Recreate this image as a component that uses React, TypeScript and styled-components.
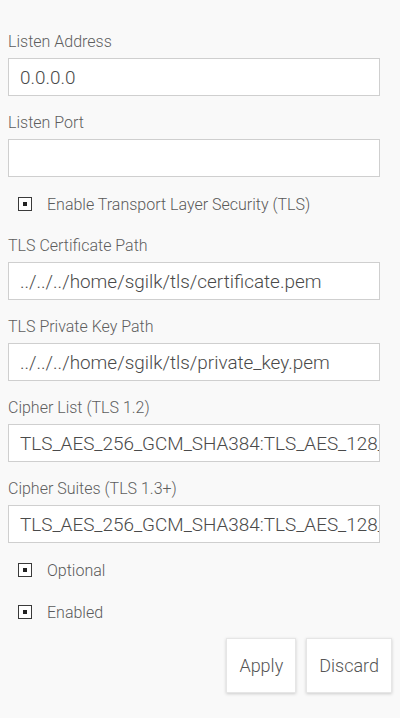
import { createGlobalStyle } from "styled-components";
import styled from "styled-components";

const GlobalStyle = createGlobalStyle`
  html, body {
    margin: 0;
    padding: 0;
    background: #f9f9f9;
  }
  body {
    font-family: Roboto, "Liberation Sans", sans-serif;
    color: #666;
  }
`;

const Page = styled.div`
  display: flex;
  flex-direction: column;
  padding: 32px 8px 24px 8px;
  min-height: 718px;
  box-sizing: border-box;
`;

const Field = styled.div`
  display: flex;
  flex-direction: column;
  gap: 7px;
  margin-bottom: 17px;
`;

const Label = styled.label`
  font-size: 16px;
  font-weight: 300;
  line-height: 19px;
  color: #5e5e5e;
`;

const Input = styled.input`
  box-sizing: border-box;
  width: 372px;
  height: 38px;
  padding: 0 0 0 11px;
  border: 1px solid #cfcfcf;
  background: #fff;
  font-family: Roboto, "Liberation Sans", sans-serif;
  font-size: 18.9px;
  font-weight: 300;
  color: #4a4a4a;
  outline: none;
`;

const CheckRow = styled.label<{ $last?: boolean }>`
  display: flex;
  align-items: center;
  gap: 15px;
  height: 20px;
  padding-left: 10px;
  margin-bottom: ${(p) => (p.$last ? "16px" : "22px")};
  font-size: 16px;
  font-weight: 300;
  color: #5a5a5a;
`;

const Box = styled.span<{ $checked?: boolean }>`
  position: relative;
  box-sizing: border-box;
  width: 14px;
  height: 14px;
  border: 1.5px solid #3a3a3a;
  background: #fff;

  &::after {
    content: "";
    display: ${(p) => (p.$checked ? "block" : "none")};
    position: absolute;
    left: 3.5px;
    top: 3.5px;
    width: 4px;
    height: 4px;
    background: #222;
  }
`;

const Actions = styled.div`
  display: flex;
  justify-content: flex-end;
  gap: 10px;
`;

const Button = styled.button`
  height: 55px;
  padding: 0 12px;
  border: 1px solid #e6e6e6;
  background: #fff;
  box-shadow: 0 1px 3px rgba(0, 0, 0, 0.18);
  font-family: Roboto, "Liberation Sans", sans-serif;
  font-size: 18px;
  font-weight: 300;
  color: #555;
  cursor: pointer;
`;

const fields = [
  { label: "Listen Address", value: "0.0.0.0" },
  { label: "Listen Port", value: "" },
];

const tlsFields = [
  { label: "TLS Certificate Path", value: "../../../home/sgilk/tls/certificate.pem" },
  { label: "TLS Private Key Path", value: "../../../home/sgilk/tls/private_key.pem" },
  {
    label: "Cipher List (TLS 1.2)",
    value: "TLS_AES_256_GCM_SHA384:TLS_AES_128_GCM_SHA256:TLS_CHACHA20_POLY1305_SHA256",
  },
  {
    label: "Cipher Suites (TLS 1.3+)",
    value: "TLS_AES_256_GCM_SHA384:TLS_AES_128_GCM_SHA256:TLS_CHACHA20_POLY1305_SHA256",
  },
];

const TextField = ({ label, value }: { label: string; value: string }) => (
  <Field>
    <Label>{label}</Label>
    <Input defaultValue={value} />
  </Field>
);

const Check = ({ children, last }: { children: string; last?: boolean }) => (
  <CheckRow $last={last}>
    <Box $checked />
    {children}
  </CheckRow>
);

export default function App() {
  return (
    <>
      <GlobalStyle />
      <Page>
        {fields.map((f) => (
          <TextField key={f.label} {...f} />
        ))}
        <Check>Enable Transport Layer Security (TLS)</Check>
        {tlsFields.map((f) => (
          <TextField key={f.label} {...f} />
        ))}
        <Check>Optional</Check>
        <Check last>Enabled</Check>
        <Actions>
          <Button>Apply</Button>
          <Button>Discard</Button>
        </Actions>
      </Page>
    </>
  );
}
